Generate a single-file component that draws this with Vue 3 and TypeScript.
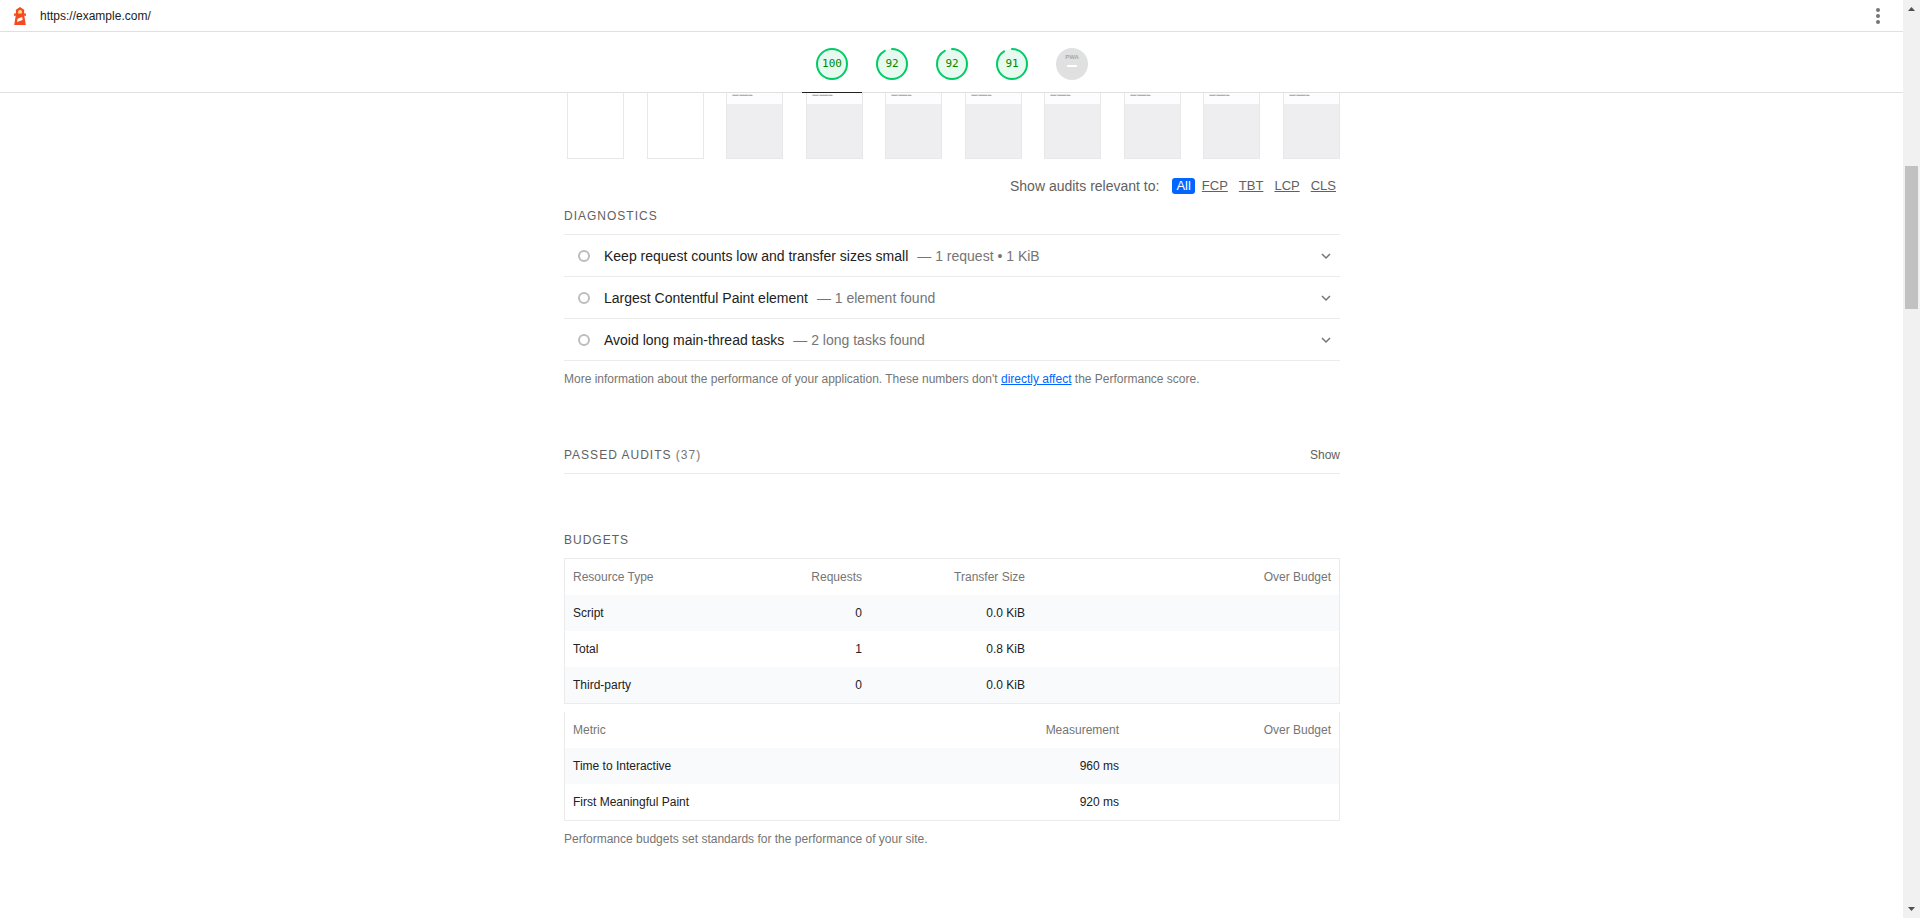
<script setup lang="ts">
import { ref } from 'vue'

interface Gauge {
  label: string
  score: number
}

interface Audit {
  title: string
  display: string
}

const gauges: Gauge[] = [
  { label: 'Performance', score: 100 },
  { label: 'Accessibility', score: 92 },
  { label: 'Best Practices', score: 92 },
  { label: 'SEO', score: 91 },
]

const frames: boolean[] = [false, false, true, true, true, true, true, true, true, true]

const filters: string[] = ['All', 'FCP', 'TBT', 'LCP', 'CLS']
const activeFilter = ref<string>('All')

const audits: Audit[] = [
  { title: 'Keep request counts low and transfer sizes small', display: '1 request • 1 KiB' },
  { title: 'Largest Contentful Paint element', display: '1 element found' },
  { title: 'Avoid long main-thread tasks', display: '2 long tasks found' },
]

const resources = [
  { type: 'Script', requests: '0', size: '0.0 KiB' },
  { type: 'Total', requests: '1', size: '0.8 KiB' },
  { type: 'Third-party', requests: '0', size: '0.0 KiB' },
]

const timings = [
  { metric: 'Time to Interactive', value: '960 ms' },
  { metric: 'First Meaningful Paint', value: '920 ms' },
]
</script>

<template>
  <div class="shell">
    <div class="page">
      <header class="topbar">
        <svg class="logo" viewBox="0 0 24 24" aria-hidden="true">
          <path
            fill="#f44b21"
            d="M12 3l4.125 2.625v3.75H18v2.25h-1.688l1.5 9.375H6.188l1.5-9.375H6v-2.25h1.875V5.648L12 3z"
          />
          <path fill="#fff" d="M14.201 12.938L9.54 14.633 9 18.028l5.625-2.062-.424-3.028z" />
          <path fill="#ffe082" d="M12.005 5.67l-1.88 1.207v2.498h3.75V6.86l-1.87-1.19z" />
        </svg>
        <a class="url" href="https://example.com/">https://example.com/</a>
        <button class="menu" type="button" aria-label="Tools menu">
          <svg viewBox="0 0 24 24" aria-hidden="true">
            <circle cx="12" cy="6" r="2" />
            <circle cx="12" cy="12" r="2" />
            <circle cx="12" cy="18" r="2" />
          </svg>
        </button>
      </header>

      <nav class="scores" aria-label="Categories">
        <a
          v-for="(gauge, index) in gauges"
          :key="gauge.label"
          class="score"
          :class="{ current: index === 0 }"
          href="#"
          :aria-label="gauge.label"
        >
          <span class="gauge">
            <svg viewBox="0 0 32 32" aria-hidden="true">
              <circle class="base" cx="16" cy="16" r="15" />
              <circle
                class="arc"
                cx="16"
                cy="16"
                r="15"
                pathLength="100"
                :stroke-dasharray="`${gauge.score} 100`"
                transform="rotate(-90 16 16)"
              />
            </svg>
            <span class="value">{{ gauge.score }}</span>
          </span>
        </a>
        <a class="score" href="#" aria-label="Progressive Web App">
          <span class="gauge pwa">
            <span class="pwa-name">PWA</span>
            <span class="pwa-dash"></span>
          </span>
        </a>
      </nav>

      <main class="report">
        <div class="filmstrip">
          <div v-for="(painted, index) in frames" :key="index" class="frame" :class="{ painted }">
            <svg v-if="painted" viewBox="0 0 55 11" aria-hidden="true">
              <rect width="55" height="11" fill="#fdfdff" />
              <g stroke="#8c8c96" stroke-width="1">
                <path d="M5 1.5h20" opacity=".2" />
                <path d="M5 2.500h21" opacity=".4" />
                <path d="M6 2.500h5m2 0h8m1 0h3" opacity=".5" />
              </g>
            </svg>
          </div>
        </div>

        <fieldset class="filter">
          <legend class="hidden">Metric filter</legend>
          <span class="filter-text">Show audits relevant to:</span>
          <span class="chips">
            <span v-for="name in filters" :key="name" class="chip">
              <input
                :id="`filter-${name}`"
                v-model="activeFilter"
                class="hidden"
                type="radio"
                name="metric"
                :value="name"
              />
              <label :for="`filter-${name}`">{{ name }}</label>
            </span>
          </span>
        </fieldset>

        <section class="diagnostics">
          <h2 class="heading">DIAGNOSTICS</h2>
          <details v-for="audit in audits" :key="audit.title" class="audit">
            <summary>
              <span class="dot"></span>
              <span class="audit-title">{{ audit.title }}</span>
              <span class="audit-display">— {{ audit.display }}</span>
              <svg class="chevron" viewBox="0 0 12 12" aria-hidden="true">
                <path d="M2 4l4 4 4-4" />
              </svg>
            </summary>
          </details>
          <p class="note">
            More information about the performance of your application. These numbers don't
            <a href="#">directly affect</a> the Performance score.
          </p>
        </section>

        <details class="passed">
          <summary class="heading">
            <span>PASSED AUDITS <span class="count">(37)</span></span>
            <span class="show">Show</span>
          </summary>
        </details>

        <section class="budgets">
          <h2 class="heading">BUDGETS</h2>
          <table>
            <colgroup>
              <col />
              <col class="col-requests" />
              <col class="col-size" />
              <col class="col-over-size" />
            </colgroup>
            <thead>
              <tr>
                <th scope="col">Resource Type</th>
                <th scope="col" class="num">Requests</th>
                <th scope="col" class="num">Transfer Size</th>
                <th scope="col" class="num">Over Budget</th>
              </tr>
            </thead>
            <tbody>
              <tr v-for="row in resources" :key="row.type">
                <td>{{ row.type }}</td>
                <td class="num">{{ row.requests }}</td>
                <td class="num">{{ row.size }}</td>
                <td></td>
              </tr>
            </tbody>
          </table>
          <table>
            <colgroup>
              <col />
              <col class="col-size" />
              <col class="col-over-time" />
            </colgroup>
            <thead>
              <tr>
                <th scope="col">Metric</th>
                <th scope="col" class="num">Measurement</th>
                <th scope="col" class="num">Over Budget</th>
              </tr>
            </thead>
            <tbody>
              <tr v-for="row in timings" :key="row.metric">
                <td>{{ row.metric }}</td>
                <td class="num">{{ row.value }}</td>
                <td></td>
              </tr>
            </tbody>
          </table>
          <p class="note">Performance budgets set standards for the performance of your site.</p>
        </section>
      </main>
    </div>

    <div class="scrollbar">
      <button type="button" aria-label="Scroll up">
        <svg viewBox="0 0 17 17" aria-hidden="true"><path d="M5 11h7L8.500 7z" /></svg>
      </button>
      <div class="track"><div class="thumb"></div></div>
      <button type="button" aria-label="Scroll down">
        <svg viewBox="0 0 17 17" aria-hidden="true"><path d="M5 6h7l-3.500 4z" /></svg>
      </button>
    </div>
  </div>
</template>

<style>
body {
  margin: 0;
  background: #fff;
}
</style>

<style scoped>
.shell {
  display: flex;
  height: 100vh;
  overflow: hidden;
  font-family: 'Liberation Sans', Arial, sans-serif;
  font-size: 14px;
  line-height: 16px;
  color: #212121;
}

.page {
  flex: 1;
  min-width: 0;
}

button {
  padding: 0;
  border: 0;
  background: none;
}

.hidden {
  position: absolute;
  width: 1px;
  height: 1px;
  margin: 0;
  padding: 0;
  opacity: 0;
  overflow: hidden;
}

.topbar {
  display: flex;
  align-items: center;
  height: 31px;
  padding: 0 13px 0 8px;
  border-bottom: 1px solid #e0e0e0;
}

.logo {
  width: 24px;
  height: 24px;
}

.url {
  margin-left: 8px;
  font-size: 12px;
  color: #212121;
  text-decoration: none;
}

.menu {
  width: 24px;
  height: 24px;
  margin-left: auto;
}

.menu svg {
  display: block;
  fill: #757575;
}

.scores {
  display: flex;
  justify-content: center;
  height: 60px;
  padding-left: 1px;
  border-bottom: 1px solid #e0e0e0;
}

.score {
  display: flex;
  justify-content: center;
  box-sizing: border-box;
  width: 60px;
  height: 61px;
  padding-top: 16px;
  text-decoration: none;
}

.score.current {
  border-bottom: 1px solid #212121;
}

.gauge {
  display: grid;
  place-items: center;
  width: 32px;
  height: 32px;
}

.gauge > svg,
.gauge > .value {
  grid-area: 1 / 1;
}

.gauge svg {
  width: 32px;
  height: 32px;
}

.base {
  fill: #e6faf0;
}

.arc {
  fill: none;
  stroke: #00cc66;
  stroke-width: 2;
  stroke-linecap: round;
}

.value {
  font-family: 'DejaVu Sans Mono', monospace;
  font-size: 11px;
  color: #008800;
}

.gauge.pwa {
  display: flex;
  flex-direction: column;
  align-items: center;
  box-sizing: border-box;
  padding-top: 5px;
  border-radius: 50%;
  background: #e0e0e0;
}

.pwa-name {
  font-size: 6px;
  font-weight: 700;
  line-height: 8px;
  color: #a8a8a8;
}

.pwa-dash {
  width: 10px;
  height: 2px;
  margin-top: 4px;
  background: #fff;
}

.report {
  max-width: 776px;
  margin: 0 auto;
  padding-left: 1px;
}

.filmstrip {
  display: flex;
  justify-content: space-between;
  padding-left: 3px;
}

.frame {
  box-sizing: border-box;
  width: 57px;
  height: 66px;
  border: 1px solid #e8e8e8;
  border-top: 0;
}

.frame.painted {
  background: #eeeef0;
}

.frame svg {
  display: block;
  width: 100%;
}

.filter {
  display: flex;
  justify-content: flex-end;
  gap: 13px;
  min-width: 0;
  margin: 19px 0 0;
  padding: 0;
  border: 0;
  color: #616161;
}

.chips {
  display: flex;
  gap: 3px;
}

.chip label {
  display: block;
  padding: 0 4px;
  border-radius: 3px;
  font-size: 13px;
  text-decoration: underline;
}

.chip input:checked + label {
  background: #0066ff;
  color: #fff;
  text-decoration: none;
}

.heading {
  margin: 0;
  padding-bottom: 8px;
  border-bottom: 1px solid #ebebeb;
  font-size: 12px;
  font-weight: 400;
  line-height: 20px;
  letter-spacing: 1px;
  color: #616161;
}

.diagnostics {
  margin-top: 12px;
}

.audit {
  border-bottom: 1px solid #ebebeb;
}

.audit summary {
  display: flex;
  align-items: center;
  height: 41px;
  padding: 0 8px 0 14px;
  list-style: none;
}

.dot {
  box-sizing: border-box;
  width: 12px;
  height: 12px;
  margin-right: 14px;
  border: 2px solid #bdbdbd;
  border-radius: 50%;
}

.audit-display {
  margin-left: 9px;
  color: #757575;
}

.chevron {
  width: 12px;
  height: 12px;
  margin-left: auto;
  fill: none;
  stroke: #757575;
  stroke-width: 1.5;
}

.note {
  margin: 10px 0 0;
  font-size: 12px;
  color: #757575;
}

.note a {
  color: #0066ff;
}

.passed {
  margin-top: 58px;
}

.passed summary {
  display: flex;
  justify-content: space-between;
  list-style: none;
}

.count {
  color: #757575;
}

.show {
  letter-spacing: normal;
}

.budgets {
  margin-top: 56px;
}

table {
  width: 100%;
  margin-bottom: 8px;
  border: 1px solid #ebebeb;
  border-top: 0;
  border-collapse: separate;
  border-spacing: 0;
  table-layout: fixed;
  font-size: 12px;
}

table:last-of-type {
  margin-bottom: 0;
}

.col-requests {
  width: 120px;
}

.col-size {
  width: 163px;
}

.col-over-size {
  width: 306px;
}

.col-over-time {
  width: 212px;
}

th,
td {
  height: 20px;
  padding: 8px;
  font-weight: 400;
  text-align: left;
}

th {
  color: #757575;
}

.num {
  text-align: right;
}

tbody tr:nth-child(odd) {
  background: #f8fafc;
}

.scrollbar {
  display: flex;
  flex-direction: column;
  width: 17px;
  background: #f1f1f1;
}

.scrollbar button,
.scrollbar svg {
  display: block;
  width: 17px;
  height: 17px;
}

.scrollbar svg {
  fill: #505050;
}

.track {
  flex: 1;
  padding: 149px 2px 0;
}

.thumb {
  height: 143px;
  background: #c1c1c1;
}
</style>
